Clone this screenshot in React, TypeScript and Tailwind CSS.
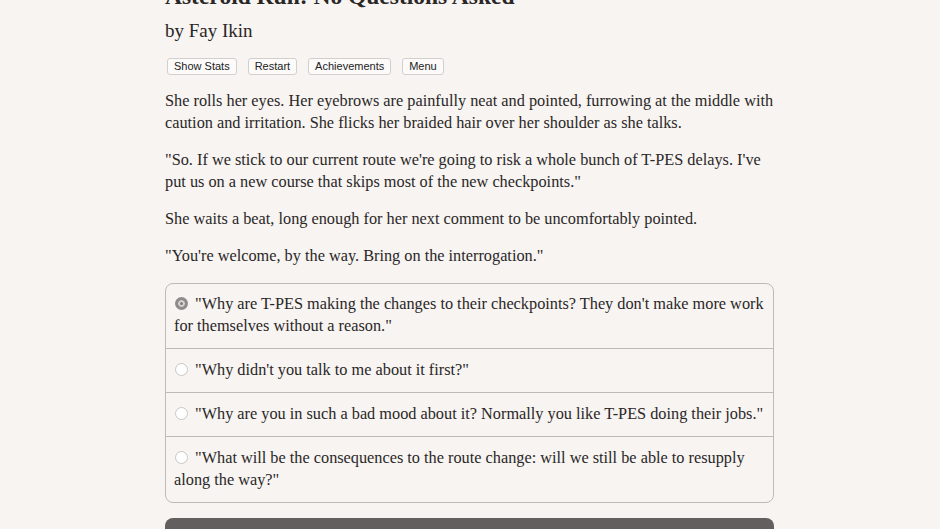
import React from "react";

const serif = { fontFamily: '"Liberation Serif", "Times New Roman", serif' };

const choices: { lines: string[]; selected: boolean }[] = [
  { lines: ['"Why are T-PES making the changes to their checkpoints? They don\'t make more work', 'for themselves without a reason."'], selected: true },
  { lines: ['"Why didn\'t you talk to me about it first?"'], selected: false },
  { lines: ['"Why are you in such a bad mood about it? Normally you like T-PES doing their jobs."'], selected: false },
  { lines: ['"What will be the consequences to the route change: will we still be able to resupply', 'along the way?"'], selected: false },
];

const paras: string[][] = [
  ["She rolls her eyes. Her eyebrows are painfully neat and pointed, furrowing at the middle with", "caution and irritation. She flicks her braided hair over her shoulder as she talks."],
  ['"So. If we stick to our current route we\'re going to risk a whole bunch of T-PES delays. I\'ve', 'put us on a new course that skips most of the new checkpoints."'],
  ["She waits a beat, long enough for her next comment to be uncomfortably pointed."],
  ['"You\'re welcome, by the way. Bring on the interrogation."'],
];

function Lines({ lines }: { lines: string[] }) {
  return (
    <>
      {lines.map((l, i) => (
        <React.Fragment key={i}>
          {i > 0 && <br />}
          {l}
        </React.Fragment>
      ))}
    </>
  );
}

export default function App() {
  return (
    <div className="h-[529px] w-full bg-[#f7f4f2] text-[#2a2726] overflow-hidden" style={serif}>
      <div className="w-[609px] ml-[165px] -mt-[19px]">
        <h1 className="text-[23.5px] leading-[30px] font-bold m-0 whitespace-nowrap">Asteroid Run: No Questions Asked</h1>
        <div className="text-[19px] leading-[24px] mt-[8px]">by Fay Ikin</div>
        <div className="flex gap-[11px] mt-[15px] ml-[2px]" style={{ fontFamily: '"Liberation Sans", Arial, sans-serif' }}>
          {["Show Stats", "Restart", "Achievements", "Menu"].map((b) => (
            <button key={b} className="h-[17px] px-[6px] text-[11px] leading-[15px] bg-[#fcfbfa] border border-[#d3cfcc] rounded-[3px] text-[#222]">
              {b}
            </button>
          ))}
        </div>
        <div className="mt-[15px] text-[16.3px] leading-[22px] flex flex-col gap-[15px] whitespace-nowrap">
          {paras.map((p, i) => (
            <p key={i}>
              <Lines lines={p} />
            </p>
          ))}
        </div>
        <div className="mt-[16px] border border-[#bfbab7] rounded-[8px] overflow-hidden">
          {choices.map((c, i) => (
            <div key={i} className={`px-[8px] pb-[11px] text-[16.3px] leading-[22px] whitespace-nowrap ${i > 0 ? "border-t border-[#bfbab7] pt-[10px]" : "pt-[9px]"}`}>
              <span className={`inline-block align-[-1px] w-[13px] h-[13px] rounded-full mr-[7px] ml-[1px] ${c.selected ? "bg-[#7f7c7b] border-[3px] border-[#8e8b8a] shadow-[inset_0_0_0_2px_#d6d3d2]" : "bg-white border border-[#c9c6c4]"}`}></span>
              <Lines lines={c.lines} />
            </div>
          ))}
        </div>
        <div className="mt-[15px] h-[40px] rounded-[8px] bg-[#625f5e] flex justify-center pt-[12px] text-[#f1efee] text-[16px]">Next</div>
      </div>
    </div>
  );
}
